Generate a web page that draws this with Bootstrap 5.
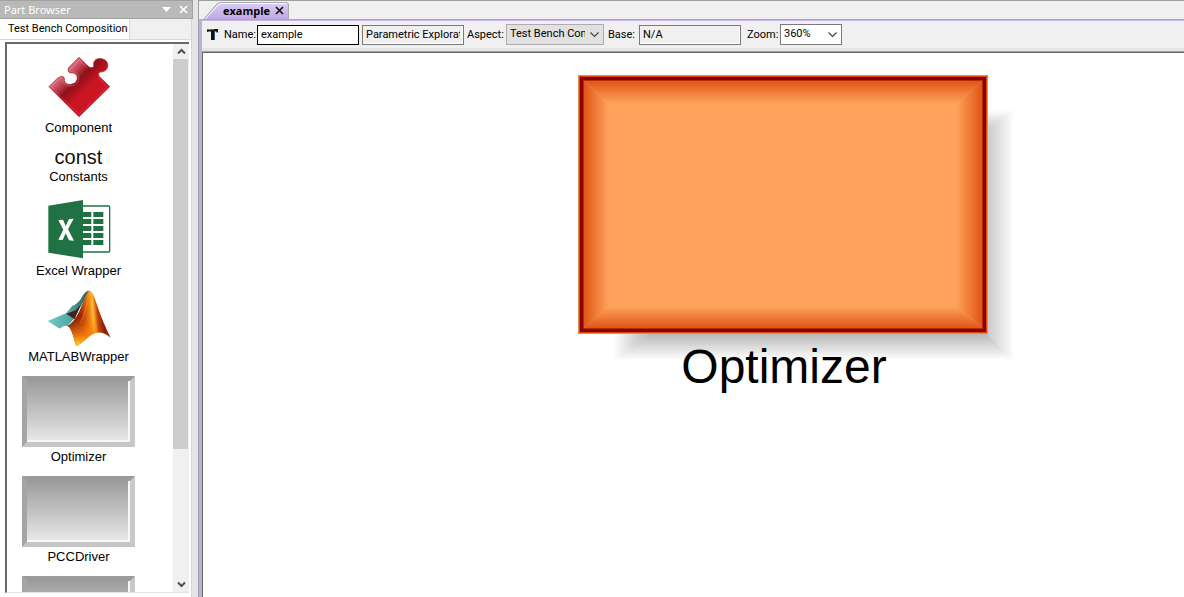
<!DOCTYPE html>
<html lang="en">
<head>
<meta charset="utf-8">
<meta name="viewport" content="width=device-width, initial-scale=1">
<title>example</title>
<link href="https://cdn.jsdelivr.net/npm/bootstrap@5.3.0/dist/css/bootstrap.min.css" rel="stylesheet">
<style>
  body { font: 11px/14px Roboto, "Liberation Sans", Arial, sans-serif; color: #000; background: #f0f0f0; }
  button { color: inherit; }

  /* part browser */
  .browser { width: 192px; border-right: 1px solid #d5d5d5; }
  .browser-title { height: 19px; margin-right: -2px; background: #b9b9b9; border: solid #a2a2a2; border-width: 1px 1px 1px 0; color: #fff; font: 11px/17px "Noto Sans", "Open Sans", sans-serif; }
  .part-tabs { height: 22px; }
  .part-tab.btn { width: 130px; background: #fff; border: 0; border-right: 1px solid #d9d9d9; font: inherit; color: #000; }
  .part-pane { border-top: 1px solid #d9d9d9; background: #fff; padding: 2px 2px 4px 5px; }
  .part-box { border: 1px solid #e3e3e3; border-top: 2px solid #696969; border-left: 2px solid #696969; border-right: 0; }
  .part-list { width: 143px; padding-top: 12px; gap: 10px; }
  .part { font: 13px/18px "Liberation Sans", Arial, sans-serif; }
  .part-label { padding-top: 1px; }
  .const-glyph { font-size: 20px; line-height: 20px; color: #111; }
  .plate { width: 113px; height: 71px; border: 5px solid; border-color: #9b9b9b #c9c9c9 #c6c6c6 #a5a5a5; background: linear-gradient(#9c9c9c, #e9e9e9); box-shadow: inset -2px -2px 0 #f8f8f8; }
  .bar { width: 16px; background: #f0f0f0; }
  .bar button { height: 15px; }
  .thumb { flex: 391 0 0; width: 15px; background: #cdcdcd; }
  .track { flex: 128 0 0; }

  .splitter { width: 6px; background: #e6e6e6; }

  /* document */
  .doc { border-left: 1px solid #a0a0a0; }
  .doc-tabs { height: 20px; border-top: 1px solid #a0a0a0; border-bottom: 1px solid #a9a9b0; }
  .doc-tab { width: 86px; height: 18px; padding-left: 20px; font: bold 11px/17px "Open Sans", "Noto Sans", sans-serif; }
  .tab-shape { z-index: -1; }
  .doc-body { border-left: 3px solid #bfaee2; border-top: 1px solid #c9b4ea; }
  .tool-strip { height: 31px; padding: 3px 5px; border-bottom: 4px solid #e5e5e5; display: grid; align-items: center;
    grid-template-columns: 17px 33px 102px 3px 102px 3px 39px 98px 4px 31px 102px 6px 33px 62px; }
  .field, .pick { width: 100%; height: 20px; border: 1px solid #7a7a7a; border-radius: 0; background-color: #fff; color: #000; font: inherit; padding: 0 3px 1px; }
  .field[readonly] { background-color: #f0f0f0; box-shadow: inset -1px -1px 0 #fff; }
  .field-name { border-color: #000; }
  .pick { height: 21px; padding: 0 18px 1px 3px; background: #fff url("data:image/svg+xml,%3Csvg xmlns='http://www.w3.org/2000/svg' width='9' height='6'%3E%3Cpath d='M.5 .5 4.500 4.500 8.500 .5' fill='none' stroke='%23444' stroke-width='1.200'/%3E%3C/svg%3E") no-repeat right 4px center / 9px 6px; }
  .pick-muted { background-color: #e1e1e1; border-color: #adadad; }
  .sheet { background: #fff; border-top: 1px solid #696969; border-left: 1px solid #696969; box-shadow: 0 -1px 0 #a0a0a0; }
  .node { left: 375px; top: 22px; width: 436px; font-family: "Liberation Sans", Arial, sans-serif; }
  .node-name { width: 412px; margin-top: -24px; font-size: 48px; line-height: 60px; }
</style>
</head>
<body class="vh-100 d-flex overflow-hidden">

<aside class="browser d-flex flex-column flex-shrink-0">
  <header class="browser-title d-flex align-items-center position-relative">
    <span class="ps-1 flex-grow-1">Part Browser</span>
    <button class="btn border-0 p-0 me-2 d-flex" type="button" aria-label="Panel menu"><svg width="9" height="5"><path d="M0 0h9L4.500 5z" fill="#fff"/></svg></button>
    <button class="btn border-0 p-0 me-1 d-flex" type="button" aria-label="Close panel"><svg width="9" height="9"><path d="M1 1l7 7M8 1L1 8" stroke="#fff" stroke-width="1.700"/></svg></button>
  </header>
  <nav class="part-tabs d-flex"><button type="button" class="part-tab btn rounded-0 p-0 ps-2 text-start">Test Bench Composition</button></nav>
  <div class="part-pane flex-grow-1 d-flex overflow-hidden">
    <div class="part-box flex-grow-1 d-flex overflow-hidden">
      <div class="flex-grow-1 overflow-hidden">
        <ul class="part-list list-unstyled m-0 d-flex flex-column text-center">
          <li class="part">
            <svg class="d-block mx-auto overflow-visible" width="63" height="62" viewBox="82 22 189 186">
              <defs><linearGradient id="red" x1="0" y1="0" x2="1" y2="1"><stop offset=".12" stop-color="#f6c3d0"/><stop offset=".3" stop-color="#cf5366"/><stop offset=".43" stop-color="#8d1018"/><stop offset=".58" stop-color="#cc1422"/><stop offset="1" stop-color="#c51a2a"/></linearGradient></defs>
              <path d="M88 114L112 90Q132 76 134 91C133 103 142 109 154 107C170 105 176 92 171 80C166 69 150 76 146 68Q143 61 149 55L178 26L202 50C212 61 225 59 222 47C222 34 231 29 243 30C258 31 266 42 264 53C262 65 252 70 242 70C235 72 235 80 240 85L270 114L178 204Z" fill="url(#red)" stroke="#b51f30" stroke-width="2.500"/>
              <path d="M94 114L118 90Q128 84 129 93C131 107 142 113 154 112C174 110 181 92 176 78C169 65 154 73 151 65L178 33L198 53" fill="none" stroke="#f0a5ae" stroke-width="1.500" opacity=".7"/>
              <path d="M94 115L178 197L263 115L234 86" fill="none" stroke="#ec6b74" stroke-width="1.500" opacity=".7"/>
            </svg>
            <div class="part-label">Component</div>
          </li>
          <li class="part"><div class="const-glyph">const</div><div class="part-label">Constants</div></li>
          <li class="part">
            <svg class="d-block mx-auto overflow-visible" width="63" height="65" viewBox="81 20 189 195">
              <path d="M180 50h86q3 0 3 3v132q0 3-3 3h-86z" fill="#fff" stroke="#207245" stroke-width="4"/>
              <path d="M188 68h26v15h-26zM220 68h30v15h-30zM188 89h26v15h-26zM220 89h30v15h-30zM188 110h26v15h-26zM220 110h30v15h-30zM188 131h26v15h-26zM220 131h30v15h-30zM188 152h26v15h-26zM220 152h30v15h-30z" fill="#207245"/>
              <path d="M85 49L189 32V207L85 190Z" fill="#207245"/>
              <path d="M115 92l14-1 8 19 10-21 14-1-17 32 18 34-15-1-10-21-9 20-13-1 15-30z" fill="#fff"/>
            </svg>
            <div class="part-label">Excel Wrapper</div>
          </li>
          <li class="part">
            <svg class="d-block mx-auto overflow-visible" width="65" height="57" viewBox="78 302 195 171">
              <defs>
                <linearGradient id="peak" x1="0" y1=".1" x2="1" y2="0"><stop offset="0" stop-color="#4a0b08"/><stop offset=".28" stop-color="#a82808"/><stop offset=".48" stop-color="#f18418"/><stop offset=".56" stop-color="#ffbd35"/><stop offset=".66" stop-color="#c24308"/><stop offset=".8" stop-color="#861d08"/><stop offset="1" stop-color="#d04c12"/></linearGradient>
                <linearGradient id="glow" x1="0" y1="0" x2="0" y2="1"><stop offset=".45" stop-color="#f80" stop-opacity="0"/><stop offset=".8" stop-color="#ff8210" stop-opacity=".85"/><stop offset="1" stop-color="#ffe51c"/></linearGradient>
                <linearGradient id="teal"><stop offset="0" stop-color="#72cbc5"/><stop offset=".5" stop-color="#56aaa8"/><stop offset="1" stop-color="#235450"/></linearGradient>
              </defs>
              <path d="M83 395L138 372L157 349Q175 344 188 319Q199 303 208 304L162 388L142 410Q131 407 119 418Z" fill="url(#teal)"/>
              <path d="M139 373L167 363L182 346L164 390Z" fill="#48201b"/>
              <path d="M208 304C219 303 225 330 235 358C245 387 255 410 272 445Q250 427 232 430C211 431 197 455 169 471C162 453 156 414 142 410Q162 398 174 373C190 345 194 312 208 304Z" fill="url(#peak)"/>
              <path d="M203 312C208 350 230 391 233 430C211 431 197 455 169 471C162 453 156 414 142 410Q176 390 203 312Z" fill="url(#glow)"/>
              <path d="M206 308Q202 360 181 402" fill="none" stroke="#ff9b22" stroke-width="3" opacity=".5"/>
            </svg>
            <div class="part-label">MATLABWrapper</div>
          </li>
          <li class="part"><div class="plate mx-auto"></div><div class="part-label">Optimizer</div></li>
          <li class="part"><div class="plate mx-auto"></div><div class="part-label">PCCDriver</div></li>
          <li class="part"><div class="plate mx-auto"></div></li>
        </ul>
      </div>
      <div class="bar d-flex flex-column flex-shrink-0">
        <button class="btn border-0 p-0 d-flex align-items-center justify-content-center" type="button" aria-label="Scroll up"><svg width="9" height="7"><path d="M1 5.500L4.500 2L8 5.500" fill="none" stroke="#505050" stroke-width="2"/></svg></button>
        <div class="thumb"></div>
        <div class="track"></div>
        <button class="btn border-0 p-0 d-flex align-items-center justify-content-center" type="button" aria-label="Scroll down"><svg width="9" height="7"><path d="M1 1.500L4.500 5L8 1.500" fill="none" stroke="#505050" stroke-width="2"/></svg></button>
      </div>
    </div>
  </div>
</aside>
<div class="splitter flex-shrink-0"></div>

<main class="doc flex-grow-1 d-flex flex-column overflow-hidden">
  <nav class="doc-tabs d-flex align-items-end ps-1">
    <div class="doc-tab position-relative z-0 d-flex align-items-center">
      <svg class="tab-shape position-absolute start-0 top-0" width="86" height="18"><defs><linearGradient id="lilac" x1="0" y1="0" x2="0" y2="1"><stop offset="0" stop-color="#dccdf7"/><stop offset="1" stop-color="#bda9e0"/></linearGradient></defs><path d="M1 18L14 3Q16 1.500 19 1.500H83.500Q85.500 1.500 85.500 4V18" fill="url(#lilac)" stroke="#a9a9b0"/><path d="M2.500 18L15 4Q17 2.500 20 2.500H83" fill="none" stroke="#fff"/></svg>
      <span class="flex-grow-1">example</span>
      <button class="btn border-0 p-0 me-1 d-flex" type="button" aria-label="Close example"><svg width="10" height="9"><path d="M1 1l7 7M8 1L1 8" stroke="#111" stroke-width="1.600"/></svg></button>
    </div>
  </nav>
  <div class="doc-body flex-grow-1 d-flex flex-column">
    <form class="tool-strip">
      <svg width="12" height="13"><path d="M0 4V1h11v3.500H9.500V3.500H7.500V12H4V3.500H2z" fill="#111"/><path d="M0 1.500h7" stroke="#1a9a9a"/><path d="M7.500 4v8" stroke="#35506a"/></svg>
      <label for="name">Name:</label>
      <input id="name" class="field field-name" value="example">
      <span></span>
      <input class="field" value="Parametric Exploration" aria-label="Kind" readonly>
      <span></span>
      <label for="aspect">Aspect:</label>
      <select id="aspect" class="pick pick-muted form-select"><option>Test Bench Composition</option></select>
      <span></span>
      <label for="base">Base:</label>
      <input id="base" class="field" value="N/A" readonly>
      <span></span>
      <label for="zoom">Zoom:</label>
      <select id="zoom" class="pick form-select"><option>360%</option></select>
    </form>
    <div class="sheet flex-grow-1 position-relative overflow-hidden">
      <div class="node position-absolute">
        <svg class="d-block" width="436" height="286">
          <defs>
            <linearGradient id="oT" x1="0" y1="0" x2="0" y2="1"><stop offset="0" stop-color="#e05616"/><stop offset="1" stop-color="#ffa35c"/></linearGradient>
            <linearGradient id="oB" x1="0" y1="1" x2="0" y2="0"><stop offset="0" stop-color="#e05616"/><stop offset="1" stop-color="#ffa35c"/></linearGradient>
            <linearGradient id="oL"><stop offset="0" stop-color="#e05616"/><stop offset="1" stop-color="#ffa35c"/></linearGradient>
            <linearGradient id="oR" x1="1" x2="0"><stop offset="0" stop-color="#e05616"/><stop offset="1" stop-color="#ffa35c"/></linearGradient>
            <linearGradient id="sB" x1="0" y1="0" x2="0" y2="1"><stop offset="0" stop-color="#a0a0a0"/><stop offset="1" stop-color="#fff"/></linearGradient>
            <linearGradient id="sR"><stop offset="0" stop-color="#b4b4b4"/><stop offset="1" stop-color="#fff"/></linearGradient>
            <linearGradient id="sL" x1="1" x2="0"><stop offset="0" stop-color="#a0a0a0"/><stop offset="1" stop-color="#fff"/></linearGradient>
            <linearGradient id="sT" x1="0" y1="1" x2="0" y2="0"><stop offset="0" stop-color="#b4b4b4"/><stop offset="1" stop-color="#fff"/></linearGradient>
          </defs>
          <path d="M36 35H436L399 62H73Z" fill="url(#sT)"/>
          <path d="M436 35V285L399 250V62Z" fill="url(#sR)"/>
          <path d="M36 35V285L82 250V62Z" fill="url(#sL)"/>
          <path d="M36 285H436L399 250H82Z" fill="url(#sB)"/>
          <path d="M0 0H410V259H0z" fill="#e68a50"/>
          <path d="M1 1H409V258H1z" fill="#dc480c"/>
          <path d="M2 2H408V257H2z" fill="#8b0000"/>
          <path d="M5 5H405V254H5z" fill="#b52a08"/>
          <path d="M6 6H404V253H6z" fill="#ffa35c"/>
          <path d="M6 6H404L378 29H31Z" fill="url(#oT)"/>
          <path d="M6 253H404L378 231H31Z" fill="url(#oB)"/>
          <path d="M6 6V253L31 231V29Z" fill="url(#oL)"/>
          <path d="M404 6V253L378 231V29Z" fill="url(#oR)"/>
        </svg>
        <div class="node-name position-relative text-center">Optimizer</div>
      </div>
    </div>
  </div>
</main>
<script src="https://cdn.jsdelivr.net/npm/bootstrap@5.3.0/dist/js/bootstrap.bundle.min.js"></script>
</body>
</html>
